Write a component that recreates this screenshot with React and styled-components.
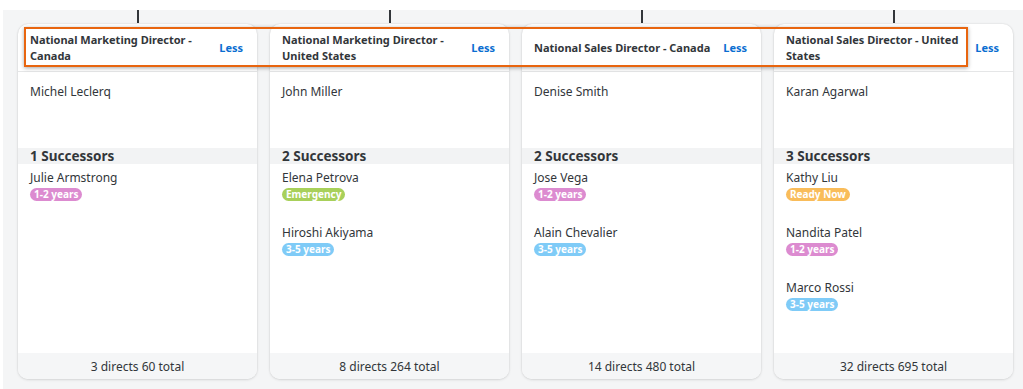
import React from 'react'
import styled, { createGlobalStyle } from 'styled-components'

const GlobalStyle = createGlobalStyle`
  body {
    margin: 0;
    background: #ffffff;
    font-family: "Noto Sans", "Open Sans", sans-serif;
    color: #32363a;
  }
`

const positions = [
  {
    title: 'National Marketing Director - Canada',
    holder: 'Michel Leclerq',
    successors: [{ name: 'Julie Armstrong', tag: '1-2 years' }],
    directs: 3,
    total: 60,
  },
  {
    title: 'National Marketing Director - United States',
    holder: 'John Miller',
    successors: [
      { name: 'Elena Petrova', tag: 'Emergency' },
      { name: 'Hiroshi Akiyama', tag: '3-5 years' },
    ],
    directs: 8,
    total: 264,
  },
  {
    title: 'National Sales Director - Canada',
    holder: 'Denise Smith',
    successors: [
      { name: 'Jose Vega', tag: '1-2 years' },
      { name: 'Alain Chevalier', tag: '3-5 years' },
    ],
    directs: 14,
    total: 480,
  },
  {
    title: 'National Sales Director - United States',
    holder: 'Karan Agarwal',
    successors: [
      { name: 'Kathy Liu', tag: 'Ready Now' },
      { name: 'Nandita Patel', tag: '1-2 years' },
      { name: 'Marco Rossi', tag: '3-5 years' },
    ],
    directs: 32,
    total: 695,
  },
]

const tagColors = {
  '1-2 years': '#dc8bd0',
  'Emergency': '#a8d05a',
  'Ready Now': '#f9bc5a',
  '3-5 years': '#7fcbf7',
}

function App() {
  return (
    <>
      <GlobalStyle />
      <Board>
        <Highlight />
        {positions.map((p) => (
          <Column key={p.title}>
            <Connector />
            <Card>
              <Header>
                <Title>{p.title}</Title>
                <LessLink>Less</LessLink>
              </Header>
              <Holder>{p.holder}</Holder>
              <SuccessorBar>{p.successors.length} Successors</SuccessorBar>
              <SuccessorList>
                {p.successors.map((s) => (
                  <Successor key={s.name}>
                    <SuccessorName>{s.name}</SuccessorName>
                    <Tag color={tagColors[s.tag]}>{s.tag}</Tag>
                  </Successor>
                ))}
              </SuccessorList>
              <Footer>
                {p.directs} directs {p.total} total
              </Footer>
            </Card>
          </Column>
        ))}
      </Board>
    </>
  )
}

export default App

const Board = styled.div`
  position: relative;
  margin: 10px 0 0 3px;
  height: 379px;
  box-sizing: border-box;
  background: #f4f5f6;
  padding: 0 0 10px 15px;
  display: flex;
  gap: 13px;
`

const Column = styled.div`
  width: 239px;
  display: flex;
  flex-direction: column;
  align-items: center;
`

const Connector = styled.div`
  width: 2px;
  height: 13px;
  background: #32363a;
  flex-shrink: 0;
`

const Card = styled.div`
  width: 100%;
  flex: 1;
  margin-top: 1px;
  background: #ffffff;
  border-radius: 10px;
  box-shadow: 0 0 2px rgba(0, 0, 0, 0.12), 0 1px 3px rgba(0, 0, 0, 0.1);
  display: flex;
  flex-direction: column;
  overflow: hidden;
`

const Header = styled.div`
  height: 48px;
  flex-shrink: 0;
  box-sizing: border-box;
  display: flex;
  align-items: center;
  gap: 10px;
  padding: 0 14px 0 12px;
  border-bottom: 1px solid #e5e6e7;
`

const Title = styled.div`
  flex: 1;
  font-size: 11px;
  font-weight: 700;
  line-height: 16px;
  color: #32363a;
`

const LessLink = styled.span`
  font-size: 11px;
  font-weight: 700;
  color: #0a6ed1;
`

const Holder = styled.div`
  height: 76px;
  flex-shrink: 0;
  box-sizing: border-box;
  padding: 12px 12px 0;
  font-size: 12px;
  line-height: 16px;
`

const SuccessorBar = styled.div`
  height: 16px;
  background: #f2f3f4;
  padding: 0 12px;
  font-size: 13.5px;
  font-weight: 700;
  line-height: 16px;
  color: #32363a;
`

const SuccessorList = styled.div`
  flex: 1;
  padding: 6px 12px 0;
  display: flex;
  flex-direction: column;
  gap: 24px;
`

const Successor = styled.div`
  display: flex;
  flex-direction: column;
  align-items: flex-start;
  gap: 2px;
`

const SuccessorName = styled.div`
  font-size: 12px;
  line-height: 16px;
`

const Tag = styled.span`
  background: ${(props) => props.color};
  color: #ffffff;
  font-size: 10px;
  font-weight: 700;
  line-height: 13px;
  padding: 0 4px;
  border-radius: 7px;
`

const Footer = styled.div`
  height: 26px;
  flex-shrink: 0;
  background: #f5f6f7;
  display: flex;
  align-items: center;
  justify-content: center;
  font-size: 12px;
  color: #32363a;
`

const Highlight = styled.div`
  position: absolute;
  left: 21px;
  top: 17px;
  width: 940px;
  height: 36px;
  border: 2px solid #e8650f;
  box-shadow: 0 1px 4px rgba(0, 0, 0, 0.35);
  pointer-events: none;
  z-index: 2;
`
